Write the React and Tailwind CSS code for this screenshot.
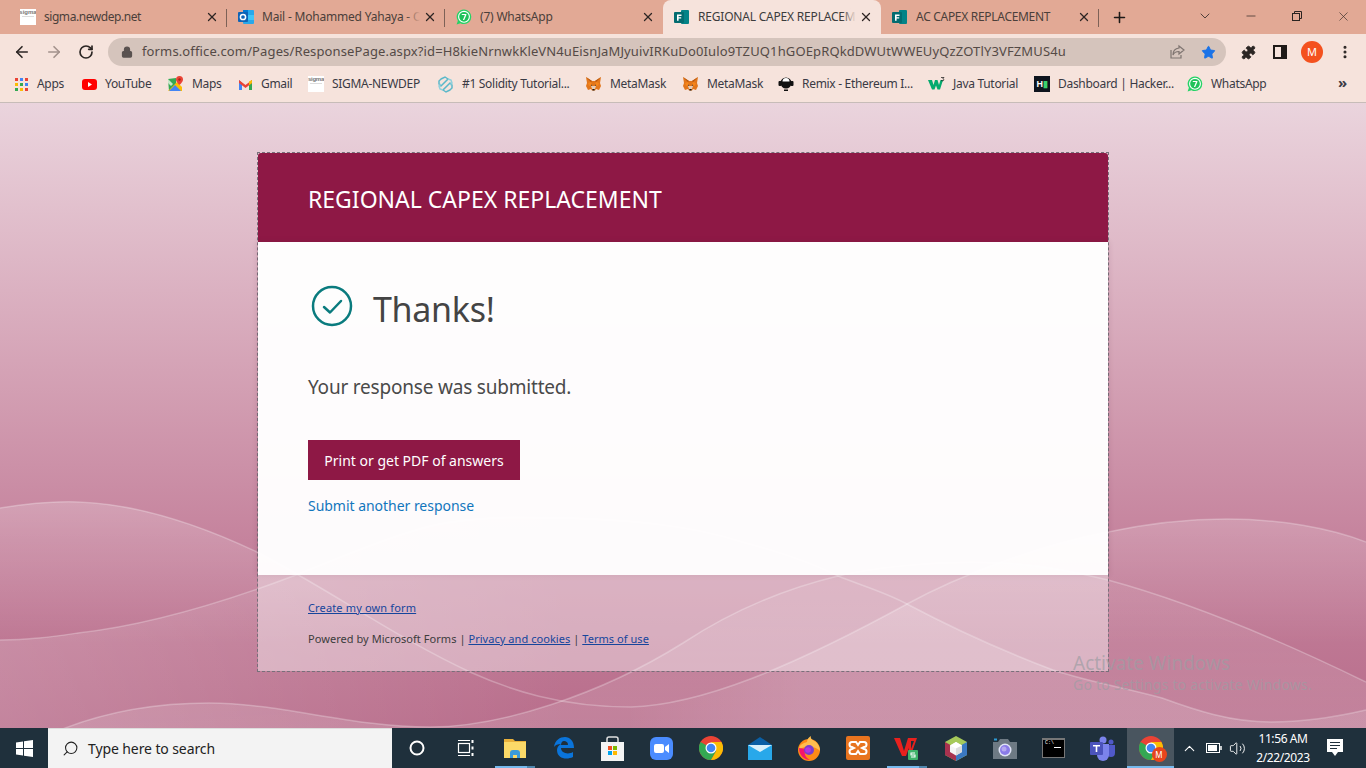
import React from "react";
import { ArrowLeft, ArrowRight, RotateCw, Lock, X, Plus, ChevronDown, Minus, Star, Puzzle, MoreVertical, Search, ChevronUp, Volume2 } from "lucide-react";

const FormsIcon = () => (
  <svg width="16" height="16" viewBox="0 0 16 16" className="shrink-0">
    <circle cx="11" cy="3.500" r="2.500" fill="#37c6d0" />
    <circle cx="12" cy="9" r="2.800" fill="#1a9ba1" />
    <rect x="7" y="1" width="8" height="14" rx="1" fill="#038387" />
    <rect x="0" y="3" width="10" height="11" rx="1" fill="#036c70" />
    <path d="M3 5.500h4.500v1.400H4.600v1.300h2.600v1.300H4.600v2.200H3z" fill="#fff" />
  </svg>
);
const OutlookIcon = () => (
  <svg width="16" height="16" viewBox="0 0 16 16" className="shrink-0">
    <rect x="5" y="1" width="11" height="14" rx="1" fill="#28a8ea" />
    <rect x="5" y="1" width="5" height="5" fill="#0078d4" />
    <rect x="10" y="6" width="6" height="5" fill="#50d9ff" opacity=".6" />
    <rect x="0" y="3" width="10" height="10" rx="1" fill="#0f63b5" />
    <circle cx="5" cy="8" r="2.600" fill="none" stroke="#fff" strokeWidth="1.500" />
  </svg>
);
const WhatsAppIcon = () => (
  <svg width="16" height="16" viewBox="0 0 16 16" className="shrink-0">
    <path d="M8 .5a7.300 7.300 0 0 1 0 14.600c-1.300 0-2.500-.3-3.600-.9L.6 15.400l1.300-3.600A7.300 7.300 0 0 1 8 .5z" fill="#25d366" />
    <circle cx="8" cy="7.800" r="5.400" fill="#1fc25a" stroke="#fff" strokeWidth="1.100" />
    <path d="M5.800 4.900h4.600v1.100L8.200 11H6.900l2-4.900H5.800z" fill="#fff" />
  </svg>
);
const SigmaIcon = () => (
  <div className="w-4 h-4 shrink-0 bg-white flex flex-col items-center overflow-hidden">
    <span className="text-[6px] leading-[7px] text-[#777] font-['Liberation_Sans',sans-serif] font-bold">sigma</span>
    <span className="w-3 h-px bg-[#ddd]" />
  </div>
);
const Fox = () => (
  <svg width="17" height="16" viewBox="0 0 17 16" className="shrink-0">
    <path d="M1 1l6 4h3l6-4-1 6 1 3-2 4-3-1-1 1.500H7L6 13l-3 1-2-4 1-3z" fill="#e2761b" />
    <path d="M3 7l3-1 1 3-3 1zM14 7l-3-1-1 3 3 1z" fill="#f6851b" />
    <path d="M6 10h5l-1 3H7z" fill="#e4ccb8" />
    <path d="M6 8.500l1.300.7-1.300.6zM11 8.500l-1.300.7 1.300.6z" fill="#233447" />
    <path d="M1 1l6 4-1 1zM16 1l-6 4 1 1z" fill="#b3550f" />
    <path d="M7.500 13h2v1.500h-2z" fill="#161616" />
  </svg>
);
const AppsIcon = () => (
  <svg width="15" height="15" viewBox="0 0 15 15" className="shrink-0">
    {[["#ea4335", "#4285f4", "#ea4335"], ["#fbbc04", "#34a853", "#4285f4"], ["#34a853", "#fbbc04", "#ea4335"]].map((r, i) =>
      r.map((c, j) => <rect key={i + "" + j} x={1 + j * 5} y={1 + i * 5} width="3" height="3" fill={c} />)
    )}
  </svg>
);
const YouTubeIcon = () => (
  <svg width="15" height="15" viewBox="0 0 15 15" className="shrink-0">
    <rect x="0" y="2" width="15" height="11" rx="3" fill="#f00" />
    <path d="M6 5l4 2.500L6 10z" fill="#fff" />
  </svg>
);
const MapsIcon = () => (
  <svg width="16" height="16" viewBox="0 0 16 16" className="shrink-0">
    <path d="M0 3l8-1v13H1z" fill="#34a853" />
    <path d="M0 15L9 6l5 5v4z" fill="#fbbc04" />
    <path d="M1 15l6-6 6 6z" fill="#4285f4" />
    <path d="M0 3l5 5-2 2-3-3z" fill="#c8e6c9" />
    <path d="M11.500 0a3.500 3.500 0 0 1 3.500 3.500C15 6 11.500 9 11.500 9S8 6 8 3.500A3.500 3.500 0 0 1 11.500 0z" fill="#ea4335" />
    <circle cx="11.500" cy="3.500" r="1.200" fill="#a52714" />
  </svg>
);
const GmailIcon = () => (
  <svg width="15" height="15" viewBox="0 0 15 15" className="shrink-0">
    <path d="M1 3v10h3V6z" fill="#4285f4" />
    <path d="M14 3v10h-3V6z" fill="#34a853" />
    <path d="M1 3l6.500 5L14 3v3L7.500 11 1 6z" fill="#ea4335" />
    <path d="M11 4.500L14 3v3l-3 2.300z" fill="#fbbc04" />
  </svg>
);
const SolidityIcon = () => (
  <svg width="17" height="17" viewBox="0 0 17 17" className="shrink-0" fill="none" stroke="#5bb8c9" strokeWidth="1.500">
    <path d="M4 3l4-2 3 2-7 7-2-2V5zM13 14l-4 2-3-2 7-7 2 2v3z" />
    <path d="M11 3l3 1 1 3-2 2M6 14l-3-1-1-3 2-2" stroke="#8fd0dc" />
  </svg>
);
const RemixIcon = () => (
  <svg width="16" height="16" viewBox="0 0 16 16" className="shrink-0">
    <circle cx="8" cy="7" r="5.500" fill="#111" />
    <rect x="0.500" y="5" width="3" height="5" rx="1" fill="#111" />
    <rect x="12.500" y="5" width="3" height="5" rx="1" fill="#111" />
    <path d="M4.500 5.500a3.500 3.500 0 0 1 7 0z" fill="#fff" />
    <path d="M6 13.500h4v1.500H6z" fill="#111" />
  </svg>
);
const W3Icon = () => (
  <svg width="17" height="15" viewBox="0 0 17 15" className="shrink-0">
    <path d="M0 3h4l1.500 5L7 3h2.500L11 8l1.500-5H15l-3 9.500H9.500l-1.500-4-1.500 4H4z" fill="#04aa6d" />
    <path d="M13 .5h3l-1.200 1.300c.9.200 1.200.7 1 1.300-.2.700-1.500 1-2.600.4" fill="none" stroke="#111" strokeWidth=".7" />
  </svg>
);
const HackerIcon = () => (
  <div className="w-4 h-4 shrink-0 bg-[#0e141e] flex items-center justify-center">
    <span className="text-[9px] leading-none font-bold text-[#fff] font-['Liberation_Sans',sans-serif]">H<span className="text-[#39d26f]">▮</span></span>
  </div>
);

const sans = "font-['Noto_Sans','Open_Sans',sans-serif]";

const tabs = [
  { t: "sigma.newdep.net", icon: <SigmaIcon />, tr: "tracking-[-0.45px]", sep: true },
  { t: "Mail - Mohammed Yahaya - Outlook", icon: <OutlookIcon />, tr: "tracking-[-0.2px]", sep: true },
  { t: "(7) WhatsApp", icon: <WhatsAppIcon />, tr: "tracking-[-0.2px]", sep: false },
  { t: "REGIONAL CAPEX REPLACEMENT", icon: <FormsIcon />, tr: "tracking-[-0.2px]", active: true },
  { t: "AC CAPEX REPLACEMENT", icon: <FormsIcon />, tr: "tracking-[-0.3px]", sep: true },
];

const bookmarks = [
  { t: "Apps", w: "w-[68px]", icon: <AppsIcon /> },
  { t: "YouTube", w: "w-[86px]", icon: <YouTubeIcon /> },
  { t: "Maps", w: "w-[70px]", icon: <MapsIcon /> },
  { t: "Gmail", w: "w-[70px]", icon: <GmailIcon /> },
  { t: "SIGMA-NEWDEP", w: "w-[129px]", icon: <SigmaIcon /> },
  { t: "#1 Solidity Tutorial...", w: "w-[148px]", icon: <SolidityIcon /> },
  { t: "MetaMask", w: "w-[97px]", icon: <Fox /> },
  { t: "MetaMask", w: "w-[96px]", icon: <Fox /> },
  { t: "Remix - Ethereum I...", w: "w-[150px]", icon: <RemixIcon /> },
  { t: "Java Tutorial", w: "w-[106px]", icon: <W3Icon /> },
  { t: "Dashboard | Hacker...", w: "w-[153px]", icon: <HackerIcon /> },
  { t: "WhatsApp", w: "w-[120px]", icon: <WhatsAppIcon /> },
];

function Tab({ t, icon, tr, sep, active }) {
  return (
    <div className={`w-[218px] h-[34px] relative flex items-center pl-[11px] pr-[8px] shrink-0 ${active ? "bg-[#f6e3dc] rounded-t-[8px]" : ""}`}>
      {icon}
      <div className={`ml-[8px] flex-1 overflow-hidden whitespace-nowrap text-[12px] ${tr} relative ${active ? "text-[#3c3c3c]" : "text-[#4b3f3a]"}`}>
        {t}
        <div className={`absolute right-0 top-0 bottom-0 w-[14px] bg-gradient-to-r from-transparent ${active ? "to-[#f6e3dc]" : "to-[#e2a995]"}`} />
      </div>
      <X size={14} strokeWidth={2.200} className="ml-[3px] text-[#2d2523] shrink-0" />
      {sep && <div className="absolute right-0 top-[9px] h-[18px] w-px bg-[#7d6157]" />}
    </div>
  );
}

const Underline = () => (
  <div className="absolute bottom-0 left-[5px] w-[40px] h-[2px] bg-[#76b9ed] flex justify-end"><div className="w-[8px] h-full bg-[#4f86ad]" /></div>
);

const TB = {
  cortana: <svg width="18" height="18" viewBox="0 0 18 18"><circle cx="9" cy="9" r="6.500" fill="none" stroke="#fff" strokeWidth="2" /></svg>,
  taskview: (
    <svg width="18" height="18" viewBox="0 0 18 18" fill="none" stroke="#fff" strokeWidth="1.200">
      <rect x="1.500" y="4.500" width="11" height="9" />
      <path d="M1 1.500h12M1 16.500h12" />
      <path d="M15.500 1v3M15.500 7.500v3M15.500 14v3" strokeWidth="2" />
    </svg>
  ),
  explorer: (
    <svg width="24" height="22" viewBox="0 0 24 22">
      <path d="M1 2h9l2 2h11v17H1z" fill="#e9b13b" />
      <rect x="1" y="5" width="22" height="16" fill="#fbd968" />
      <path d="M7 21v-5a3 3 0 0 1 3-3h4a3 3 0 0 1 3 3v5h-3v-3h-4v3z" fill="#3a9bdc" />
    </svg>
  ),
  edge: (
    <svg width="22" height="24" viewBox="0 0 22 24">
      <path d="M1 11C2 4 7 1 12 1c5 0 9 4 9 11H8c0 5 7 7 12 4v5c-6 3-16 2-16-7 0-3 2-5 4-6-3 0-6 1-7 3z" fill="#0a74da" />
      <path d="M8 9h7c0-3-2-4-4-4-2 0-3 2-3 4z" fill="#1e2f3b" />
    </svg>
  ),
  store: (
    <svg width="23" height="25" viewBox="0 0 23 25">
      <path d="M6 6V3a2 2 0 0 1 2-2h7a2 2 0 0 1 2 2v3" fill="none" stroke="#dfdfdf" strokeWidth="1.500" />
      <path d="M0 6h23v19H0z" fill="#f4f4f4" />
      <rect x="7" y="10" width="4" height="4" fill="#f25022" />
      <rect x="12" y="10" width="4" height="4" fill="#7fba00" />
      <rect x="7" y="15" width="4" height="4" fill="#00a4ef" />
      <rect x="12" y="15" width="4" height="4" fill="#ffb900" />
    </svg>
  ),
  zoom: (
    <svg width="23" height="23" viewBox="0 0 23 23">
      <rect width="23" height="23" rx="6" fill="#4a8cff" />
      <rect x="4" y="7" width="10" height="9" rx="2" fill="#fff" />
      <path d="M15 10l4-3v9l-4-3z" fill="#fff" />
    </svg>
  ),
  chrome: (
    <svg width="24" height="24" viewBox="0 0 24 24">
      <circle cx="12" cy="12" r="12" fill="#ea4335" />
      <path d="M12 12L1.600 6A12 12 0 0 0 12 24l5.200-9z" fill="#34a853" />
      <path d="M12 6h10.400A12 12 0 0 1 12 24l5.200-9z" fill="#fbbc04" />
      <circle cx="12" cy="12" r="5.500" fill="#fff" />
      <circle cx="12" cy="12" r="4.300" fill="#4285f4" />
    </svg>
  ),
  mail: (
    <svg width="24" height="23" viewBox="0 0 24 23">
      <path d="M0 8L12 0l12 8z" fill="#0a5fa5" />
      <rect y="8" width="24" height="15" fill="#28a8ea" />
      <path d="M0 8h24L12 15z" fill="#d8f0fb" />
    </svg>
  ),
  firefox: (
    <svg width="24" height="25" viewBox="0 0 24 25">
      <circle cx="12" cy="14" r="11" fill="#ff8a16" />
      <path d="M2 14C2 8 7 7 10 6c0-3 2-5 4-6-1 3 2 4 5 6 3 3 4 6 4 9-4-5-16-6-21-1z" fill="#ffbd4f" />
      <path d="M2 12c0 8 6 12 11 12-6-3-6-8-4-11z" fill="#f5156c" />
      <circle cx="12" cy="14" r="5" fill="#7c3ecb" />
      <circle cx="11" cy="14" r="2.800" fill="#b833e1" />
    </svg>
  ),
  xampp: (
    <svg width="24" height="24" viewBox="0 0 24 24">
      <rect width="24" height="24" rx="2" fill="#e8741f" />
      <path d="M6 6h4l2 3 2-3h4a2 2 0 0 1 0 5l-2 1 2 1a2 2 0 0 1 0 5h-4l-2-3-2 3H6a2 2 0 0 1 0-5l2-1-2-1a2 2 0 0 1 0-5z" fill="none" stroke="#fff" strokeWidth="2" />
    </svg>
  ),
  wps: (
    <svg width="25" height="24" viewBox="0 0 25 24">
      <path d="M0 2h6l4 13L14 2h4l-1 4-5 14H8z" fill="#e8211e" />
      <path d="M14 2h9l-5 14h-3z" fill="#e8211e" />
      <path d="M17 5h3l-3 8z" fill="#1e2f3b" />
      <rect x="14" y="14" width="10" height="10" rx="1" fill="#3fb36a" />
      <path d="M21 17h-4v2h4v2h-4" fill="none" stroke="#fff" strokeWidth="1.100" />
    </svg>
  ),
  vbox: (
    <svg width="22" height="25" viewBox="0 0 22 25">
      <path d="M11 0l11 6v13l-11 6L0 19V6z" fill="#a6c95a" />
      <path d="M0 6l11 6v13L0 19z" fill="#a8324f" />
      <path d="M22 6L11 12v13l11-6z" fill="#3a78c2" />
      <path d="M11 6l6 3.500v6.500l-6 3.500-6-3.500V9.500z" fill="#f5f5f5" />
      <path d="M5 9.500l6 3 6-3-6-3.500z" fill="#fff" />
      <path d="M11 12.500v7l6-3.500V9.500z" fill="#dcdcdc" />
    </svg>
  ),
  camera: (
    <svg width="24" height="21" viewBox="0 0 24 21">
      <path d="M0 4h5l2-3h8l2 3h7v17H0z" fill="#6e7a84" />
      <rect x="1" y="0.500" width="3" height="2" fill="#2c9bd6" />
      <circle cx="12" cy="12" r="6.500" fill="#dfe3f5" />
      <circle cx="12" cy="12" r="5" fill="#8a7be8" />
      <circle cx="11" cy="11" r="2.500" fill="#b5a8f0" />
    </svg>
  ),
  cmd: (
    <div className="w-[23px] h-[20px] bg-black border border-[#777] border-t-[2px] relative overflow-hidden">
      <span className="absolute left-[2px] top-0 text-[5px] leading-[7px] text-white font-['Liberation_Mono',monospace]">C:\</span>
      <span className="absolute left-[11px] top-[7px] w-[7px] h-px bg-white" />
    </div>
  ),
  teams: (
    <svg width="25" height="25" viewBox="0 0 25 25">
      <circle cx="13" cy="4" r="3.500" fill="#7b83eb" />
      <circle cx="21" cy="6" r="2.500" fill="#5059c9" />
      <path d="M16 9h9v8a4 4 0 0 1-8 0z" fill="#5059c9" />
      <path d="M7 8h12v11a6 6 0 0 1-12 0z" fill="#7b83eb" />
      <rect x="0" y="6" width="13" height="13" rx="1" fill="#4b53bc" />
      <path d="M3 9h7v1.500H7.300V16H5.700v-5.500H3z" fill="#fff" />
    </svg>
  ),
};

const WA = "M0,508 C25,504 50,501 78,502 C140,504 200,525 257,552 C330,590 400,640 470,672 C510,690 560,707 631,707 C700,705 790,668 907,604 C960,575 1040,545 1108,532 C1150,523 1190,519 1227,519 C1280,519 1330,528 1366,542";
const WB = "M0,640 C30,640 50,637 78,633 C150,625 230,600 296,575 C350,553 400,533 435,525 C480,516 520,517 566,518 C630,520 690,525 742,542 C780,552 810,562 838,576 C860,585 885,592 907,604 C960,632 1000,650 1053,670 C1090,682 1125,688 1162,698 C1195,710 1230,722 1271,722 C1310,722 1340,716 1366,710";
const WC = "M60,730 C110,710 160,703 209,703 C280,703 350,727 430,727 C500,727 600,695 683,643 C730,612 780,590 838,576 C880,566 950,560 1001,563 C1040,565 1075,572 1108,580 C1200,605 1290,645 1366,682";

export default function App() {
  return (
    <div className={`w-[1366px] h-[768px] overflow-hidden flex flex-col ${sans}`}>
      {/* tab strip */}
      <div className="h-[34px] shrink-0 bg-[#e2a995] flex items-stretch pl-[9px]">
        {tabs.map((t, i) => <Tab key={i} {...t} />)}
        <Plus size={17} strokeWidth={2.200} className="ml-[12px] mt-[9px] text-[#1f1a18]" />
        <div className="flex-1 flex justify-end items-center text-[#3a302c] pb-[2px]">
          <ChevronDown size={16} strokeWidth={1.300} className="mr-[31px]" />
          <Minus size={14} strokeWidth={1.300} className="mr-[33px]" />
          <svg width="12" height="12" viewBox="0 0 12 12" fill="none" stroke="#2a2320" strokeWidth="1" className="mr-[33px]"><rect x="1.500" y="3.500" width="7" height="7" /><path d="M3.500 3.500v-2h7v7h-2" /></svg>
          <X size={15} strokeWidth={1.100} className="mr-[15px]" />
        </div>
      </div>

      {/* toolbar */}
      <div className="h-[34px] shrink-0 bg-[#f6e3dc] flex items-center pt-[2px]">
        <ArrowLeft size={18} strokeWidth={2.200} className="ml-[13px] text-[#2b2523]" />
        <ArrowRight size={18} strokeWidth={2.200} className="ml-[14px] text-[#a3928c]" />
        <RotateCw size={16} strokeWidth={2.500} className="ml-[15px] text-[#2b2523]" />
        <div className="ml-[14px] w-[1118px] h-[28px] bg-[#d5c4bc] rounded-full flex items-center shrink-0">
          <Lock size={12} strokeWidth={2.500} fill="#5a5250" className="ml-[13px] text-[#5a5250]" />
          <div className="ml-[9px] text-[13px] tracking-[0.13px] text-[#544a46] whitespace-nowrap w-[940px]">forms.office.com/Pages/ResponsePage.aspx?id=H8kieNrnwkKleVN4uEisnJaMJyuivIRKuDo0Iulo9TZUQ1hGOEpRQkdDWUtWWEUyQzZOTlY3VFZMUS4u</div>
          <svg width="16" height="16" viewBox="0 0 16 16" fill="none" stroke="#7e7470" strokeWidth="1.200" className="mr-[16px] ml-auto">
            <path d="M10 2l5 4-5 4V7.500C7 7.500 5 8.500 4 11c0-4 2-6.500 6-7z" /><path d="M2 6v8h10v-3" />
          </svg>
          <Star size={15} fill="#1a73e8" strokeWidth={1.500} className="text-[#1a73e8] mr-[10px]" />
        </div>
        <Puzzle size={15} fill="#2b2523" strokeWidth={1.500} className="ml-[15px] text-[#2b2523]" />
        <svg width="14" height="14" viewBox="0 0 14 14" className="ml-[17px]"><path d="M0 0h14v14H0zM2 2v10h6V2z" fill="#1f1a18" fillRule="evenodd" /></svg>
        <div className="ml-[14px] w-[22px] h-[22px] rounded-full bg-[#f4511e] text-white text-[11px] flex items-center justify-center">M</div>
        <MoreVertical size={16} strokeWidth={2.600} className="ml-[14px] text-[#2b2523]" />
      </div>

      {/* bookmarks */}
      <div className="h-[35px] shrink-0 bg-[#f6e3dc] border-b border-[#c7bcb8] flex items-center pl-[14px] pb-[2px] text-[12px] tracking-[-0.3px] text-[#3a3a44]">
        {bookmarks.map((b, i) => (
          <div key={i} className={`${b.w} flex items-center gap-[8px] shrink-0 whitespace-nowrap`}>
            {b.icon}<span>{b.t}</span>
          </div>
        ))}
        <span className="ml-[31px] text-[15px] leading-none font-bold text-[#3a3a44] mt-[-3px]">»</span>
      </div>

      {/* page */}
      <div className="flex-1 relative overflow-hidden bg-gradient-to-b from-[#ead4dd] via-[#c5839d] via-[70%] to-[#b86d8b]">
        <svg className="absolute inset-0 w-full h-full" viewBox="0 103 1366 625" preserveAspectRatio="none">
          <defs>
            <linearGradient id="ga" gradientUnits="userSpaceOnUse" x1="0" y1="500" x2="0" y2="645">
              <stop offset="0" stopColor="#fff" stopOpacity=".2" />
              <stop offset="1" stopColor="#fff" stopOpacity="0" />
            </linearGradient>
            <linearGradient id="gb" gradientUnits="userSpaceOnUse" x1="0" y1="0" x2="1366" y2="0">
              <stop offset="0" stopColor="#fff" stopOpacity=".16" />
              <stop offset=".42" stopColor="#fff" stopOpacity="0" />
              <stop offset="1" stopColor="#fff" stopOpacity="0" />
            </linearGradient>
            <linearGradient id="gc" gradientUnits="userSpaceOnUse" x1="0" y1="560" x2="0" y2="728">
              <stop offset="0" stopColor="#fff" stopOpacity=".05" />
              <stop offset="1" stopColor="#fff" stopOpacity=".14" />
            </linearGradient>
            <linearGradient id="gd" gradientUnits="userSpaceOnUse" x1="625" y1="0" x2="800" y2="0">
              <stop offset="0" stopColor="#fff" stopOpacity="0" />
              <stop offset="1" stopColor="#fff" stopOpacity=".14" />
            </linearGradient>
          </defs>
          <path d={`${WA} V728 H0 Z`} fill="url(#ga)" />
          <path d={`${WB} V728 H0 Z`} fill="url(#gb)" />
          <path d={`${WC} V728 H60 Z`} fill="url(#gc)" />
          <path d="M631,707 C700,705 790,668 907,604 C960,632 1000,650 1053,670 C1090,682 1125,688 1162,698 C1195,710 1230,722 1271,722 C1310,722 1340,716 1366,710 V728 H631 Z" fill="url(#gd)" />
          <g fill="none" stroke="#fff" strokeOpacity=".26" strokeWidth="1.500">
            <path d={WA} />
            <path d={WB} />
            <path d={WC} />
          </g>
        </svg>

        {/* card */}
        <div className="relative mt-[49px] ml-[257px] w-[852px] h-[520px] border border-dashed border-[#77707a] flex flex-col">
          <div className="h-[89px] shrink-0 bg-[#8e1845] rounded-t-[3px] flex items-center pl-[50px] pt-[3px] text-[23px] text-white">REGIONAL CAPEX REPLACEMENT</div>
          <div className="h-[333px] shrink-0 bg-white/[0.97] pl-[50px] flex flex-col shadow-[0_0_6px_rgba(80,30,50,0.2)]">
            <div className="flex items-center mt-[41px] h-[50px]">
              <svg width="42" height="42" viewBox="0 0 42 42" className="ml-[3px] mt-[-4px]" fill="none" stroke="#0a7b7e" strokeWidth="2.500">
                <circle cx="21" cy="21" r="19" />
                <path d="M13 22l6 5.500L30 16" strokeWidth="2.500" strokeLinecap="round" strokeLinejoin="round" />
              </svg>
              <span className="ml-[20px] mt-[2px] text-[34px] leading-none tracking-[-0.3px] text-[#444]">Thanks!</span>
            </div>
            <div className="mt-[41px] text-[19px] leading-[26px] tracking-[-0.2px] text-[#4a4a4a]">Your response was submitted.</div>
            <div className="mt-[40px] w-[212px] h-[40px] bg-[#8e1845] text-white text-[14px] flex items-center justify-center">Print or get PDF of answers</div>
            <div className="mt-[15px] text-[14px] leading-[22px] tracking-[-0.03px] text-[#1276bd]">Submit another response</div>
          </div>
          <div className="flex-1 bg-white/40 pl-[50px] text-[11px] tracking-[0.05px] text-[#3c3c3c]">
            <div className="mt-[25px] leading-[15px]"><span className="underline tracking-[0.15px] text-[#15459c]">Create my own form</span></div>
            <div className="mt-[16px] leading-[15px]">
              Powered by Microsoft Forms | <span className="underline text-[#15459c]">Privacy and cookies</span> | <span className="underline text-[#15459c]">Terms of use</span>
            </div>
          </div>
        </div>

        {/* watermark */}
        <div className="absolute left-[1073px] top-[548px] text-[#9d9da3]/70">
          <div className="text-[19px] leading-[24px]">Activate Windows</div>
          <div className="text-[14px] leading-[18px] mt-[1px] tracking-[0.2px]">Go to Settings to activate Windows.</div>
        </div>
      </div>

      {/* taskbar */}
      <div className="h-[40px] shrink-0 bg-[#1f303c] flex items-stretch">
        <div className="w-[48px] flex items-center justify-center">
          <svg width="17" height="17" viewBox="0 0 17 17" fill="#fff"><path d="M0 2.500l7-1V8H0zM8 1.300L17 0v8H8zM0 9h7v6.500l-7-1zM8 9h9v8l-9-1.300z" /></svg>
        </div>
        <div className="w-[344px] bg-[#f3f3f3] border-t border-[#ddd] flex items-center pl-[14px] text-[14px] tracking-[-0.1px] text-[#222]">
          <Search size={17} strokeWidth={1.500} className="-scale-x-100 text-[#222]" />
          <span className="ml-[9px]">Type here to search</span>
        </div>
        {["cortana", "taskview", "explorer", "edge", "store", "zoom", "chrome", "mail", "firefox", "xampp", "wps", "vbox", "camera", "cmd", "teams"].map((k) => (
          <div key={k} className="w-[49px] shrink-0 relative flex items-center justify-center">
            {TB[k]}
            {(k === "explorer" || k === "wps") && <Underline />}
          </div>
        ))}
        <div className="w-[47px] shrink-0 bg-[#49555f] relative flex items-center justify-center">
          <div className="relative">
            {TB.chrome}
            <div className="absolute -right-[4px] -bottom-[2px] w-[15px] h-[15px] rounded-full bg-[#e8451d] text-white text-[8px] flex items-center justify-center">M</div>
          </div>
          <div className="absolute bottom-0 left-0 right-0 h-[2px] bg-[#76b9ed]" />
        </div>
        <ChevronUp size={17} strokeWidth={1.500} className="ml-[7px] self-center text-white" />
        <svg width="16" height="10" viewBox="0 0 16 10" className="ml-[8px] self-center" fill="none" stroke="#fff"><rect x="0.500" y="0.500" width="13" height="9" /><rect x="2" y="2" width="9" height="6" fill="#fff" stroke="none" /><path d="M15 3v4" strokeWidth="1.500" /></svg>
        <Volume2 size={17} strokeWidth={1.300} className="ml-[7px] self-center text-white" />
        <div className="w-[72px] ml-[1px] flex flex-col items-center justify-center text-white text-[12px] leading-[19px] tracking-[-0.4px]">
          <span>11:56 AM</span><span>2/22/2023</span>
        </div>
        <svg width="16" height="18" viewBox="0 0 16 18" className="ml-[8px] self-center">
          <path d="M0 0h16v13h-5l-3 4-3-4H0z" fill="#fff" />
          <path d="M3 3.500h10M3 6.500h10M3 9.500h7" stroke="#1f303c" strokeWidth="1" />
        </svg>
      </div>
    </div>
  );
}
